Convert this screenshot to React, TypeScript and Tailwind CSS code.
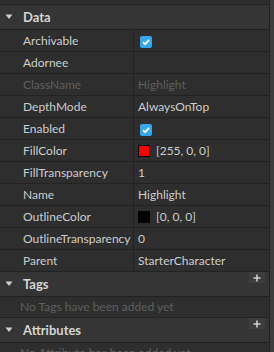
import React from 'react';

type Prop = {
  name: string;
  value?: string;
  kind?: 'text' | 'check' | 'color' | 'empty';
  swatch?: string;
  disabled?: boolean;
};

const props: Prop[] = [
  { name: 'Archivable', kind: 'check' },
  { name: 'Adornee', kind: 'empty' },
  { name: 'ClassName', value: 'Highlight', disabled: true },
  { name: 'DepthMode', value: 'AlwaysOnTop' },
  { name: 'Enabled', kind: 'check' },
  { name: 'FillColor', kind: 'color', swatch: '#ff0000', value: '[255, 0, 0]' },
  { name: 'FillTransparency', value: '1' },
  { name: 'Name', value: 'Highlight' },
  { name: 'OutlineColor', kind: 'color', swatch: '#000000', value: '[0, 0, 0]' },
  { name: 'OutlineTransparency', value: '0' },
  { name: 'Parent', value: 'StarterCharacter' },
];

function Caret() {
  return (
    <svg width="8" height="6" viewBox="0 0 8 6" className="ml-[5px] mr-[10px]">
      <path d="M0.5 0.5 H7.5 L4 5 Z" fill="#d0d0d0" />
    </svg>
  );
}

function CheckBox() {
  return (
    <div className="w-[12px] h-[12px] rounded-[2px] bg-[#35a6f0] flex items-center justify-center mt-[2px]">
      <svg width="12" height="12" viewBox="0 0 12 12">
        <path d="M3 6.2 L5.1 8.2 L9.2 3.9" stroke="#ffffff" strokeWidth="1.8" fill="none" />
      </svg>
    </div>
  );
}

function Section({ title, plus }: { title: string; plus?: boolean }) {
  return (
    <div className="relative h-[25px] bg-[#353535] border-b border-[#222222] flex items-center">
      <Caret />
      <span className="font-bold text-[13px] text-[#d4d4d4]">{title}</span>
      {plus && (
        <div className="absolute top-0 right-[4px] w-[16px] h-[11px] bg-[#3d3d3d] flex items-center justify-center">
          <svg width="8" height="8" viewBox="0 0 8 8">
            <path d="M4 0.5 V7.5 M0.5 4 H7.5" stroke="#cfcfcf" strokeWidth="1.6" />
          </svg>
        </div>
      )}
    </div>
  );
}

export default function App() {
  return (
    <div
      className="w-[274px] h-[352px] overflow-hidden bg-[#2e2e2e] flex text-[12px] leading-none text-[#cccccc]"
      style={{ fontFamily: 'Lato, "Noto Sans", sans-serif' }}
    >
      <div className="w-[270px] border-r border-[#222222] pt-[4px]">
        <div className="border-t border-[#222222]">
          <Section title="Data" />
        </div>
        {props.map((p) => (
          <div key={p.name} className="h-[22px] flex border-b border-[#222222]">
            <div
              className={`w-[134px] pl-[23px] border-r border-[#222222] flex items-center whitespace-nowrap ${
                p.disabled ? 'text-[#5e5e5e]' : ''
              }`}
            >
              {p.name}
            </div>
            <div
              className={`flex-1 pl-[4px] flex items-center ${p.disabled ? 'text-[#5e5e5e]' : ''}`}
            >
              {p.kind === 'check' && (
                <div className="pl-[2px]">
                  <CheckBox />
                </div>
              )}
              {p.kind === 'color' && (
                <>
                  <div
                    className="w-[12px] h-[12px] border border-black mr-[6px]"
                    style={{ backgroundColor: p.swatch }}
                  />
                  <span>{p.value}</span>
                </>
              )}
              {(p.kind === undefined || p.kind === 'text') && <span>{p.value}</span>}
            </div>
          </div>
        ))}
        <Section title="Tags" plus />
        <div className="h-[21px] border-b border-[#222222] pl-[20px] flex items-center text-[#5e5e5e]">
          No Tags have been added yet
        </div>
        <Section title="Attributes" plus />
        <div className="h-[20px] pl-[20px] pt-[4px] text-[#5e5e5e]">
          No Attribute has been added yet
        </div>
      </div>
      <div className="w-[4px] bg-[#3c3c3c]" />
    </div>
  );
}
